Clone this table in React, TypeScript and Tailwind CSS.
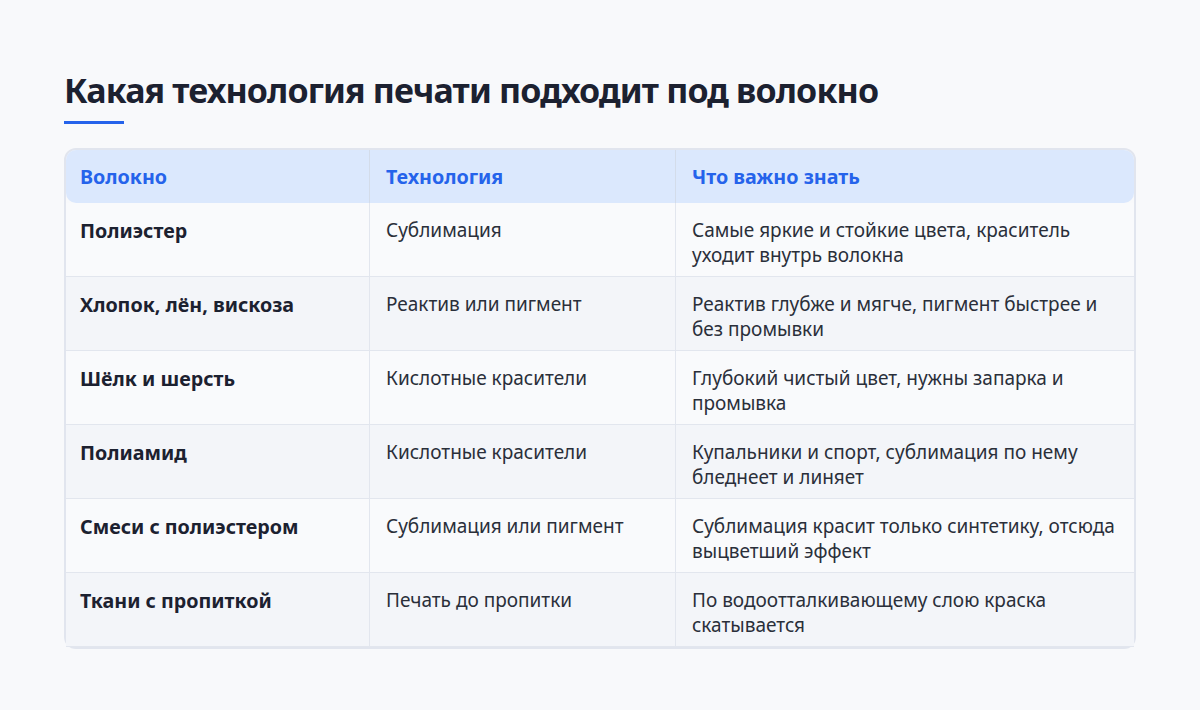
const rows = [
  { fiber: "Полиэстер", tech: "Сублимация", note: "Самые яркие и стойкие цвета, краситель уходит внутрь волокна" },
  { fiber: "Хлопок, лён, вискоза", tech: "Реактив или пигмент", note: "Реактив глубже и мягче, пигмент быстрее и без промывки" },
  { fiber: "Шёлк и шерсть", tech: "Кислотные красители", note: "Глубокий чистый цвет, нужны запарка и промывка" },
  { fiber: "Полиамид", tech: "Кислотные красители", note: "Купальники и спорт, сублимация по нему бледнеет и линяет" },
  { fiber: "Смеси с полиэстером", tech: "Сублимация или пигмент", note: "Сублимация красит только синтетику, отсюда выцветший эффект" },
  { fiber: "Ткани с пропиткой", tech: "Печать до пропитки", note: "По водоотталкивающему слою краска скатывается" },
];

export default function App() {
  return (
    <div className="min-h-[710px] w-[1200px] bg-[#f8f9fb] px-16 pt-[66px] font-['Noto_Sans',sans-serif] text-[#1c2130]">
      <h1 className="text-[34px] font-bold leading-[48px] tracking-tight">
        Какая технология печати подходит под волокно
      </h1>
      <div className="mt-[7px] h-[3px] w-[60px] bg-[#2563eb]" />

      <div className="mt-6 rounded-xl border-2 border-[#e1e5ee]">
        <div className="grid grid-cols-[304px_306px_1fr] rounded-[10px] bg-[#dbe8fd] text-[19.7px] font-bold text-[#2563eb]">
          <div className="border-r border-[#d3dcea] pb-[13px] pl-[14px] pt-[14px] leading-[26px]">Волокно</div>
          <div className="border-r border-[#d3dcea] pb-[13px] pl-4 pt-[14px] leading-[26px]">Технология</div>
          <div className="pb-[13px] pl-4 pt-[14px] leading-[26px]">Что важно знать</div>
        </div>
        {rows.map((r, i) => (
          <div
            key={r.fiber}
            className={
              "grid h-[74px] grid-cols-[304px_306px_1fr] border-b border-[#e2e6ee] text-[19px] leading-[25px] " +
              (i % 2 === 1 ? "bg-[#f3f5f9]" : "bg-[#f9fafc]")
            }
          >
            <div className="border-r border-[#e2e6ee] pl-[14px] pt-[15px] text-[19.7px] font-bold">{r.fiber}</div>
            <div className="border-r border-[#e2e6ee] pl-4 pt-[15px] text-[#2a2f3a]">{r.tech}</div>
            <div className="pl-4 pr-3 pt-[15px] text-[#2a2f3a]">{r.note}</div>
          </div>
        ))}
      </div>
    </div>
  );
}
